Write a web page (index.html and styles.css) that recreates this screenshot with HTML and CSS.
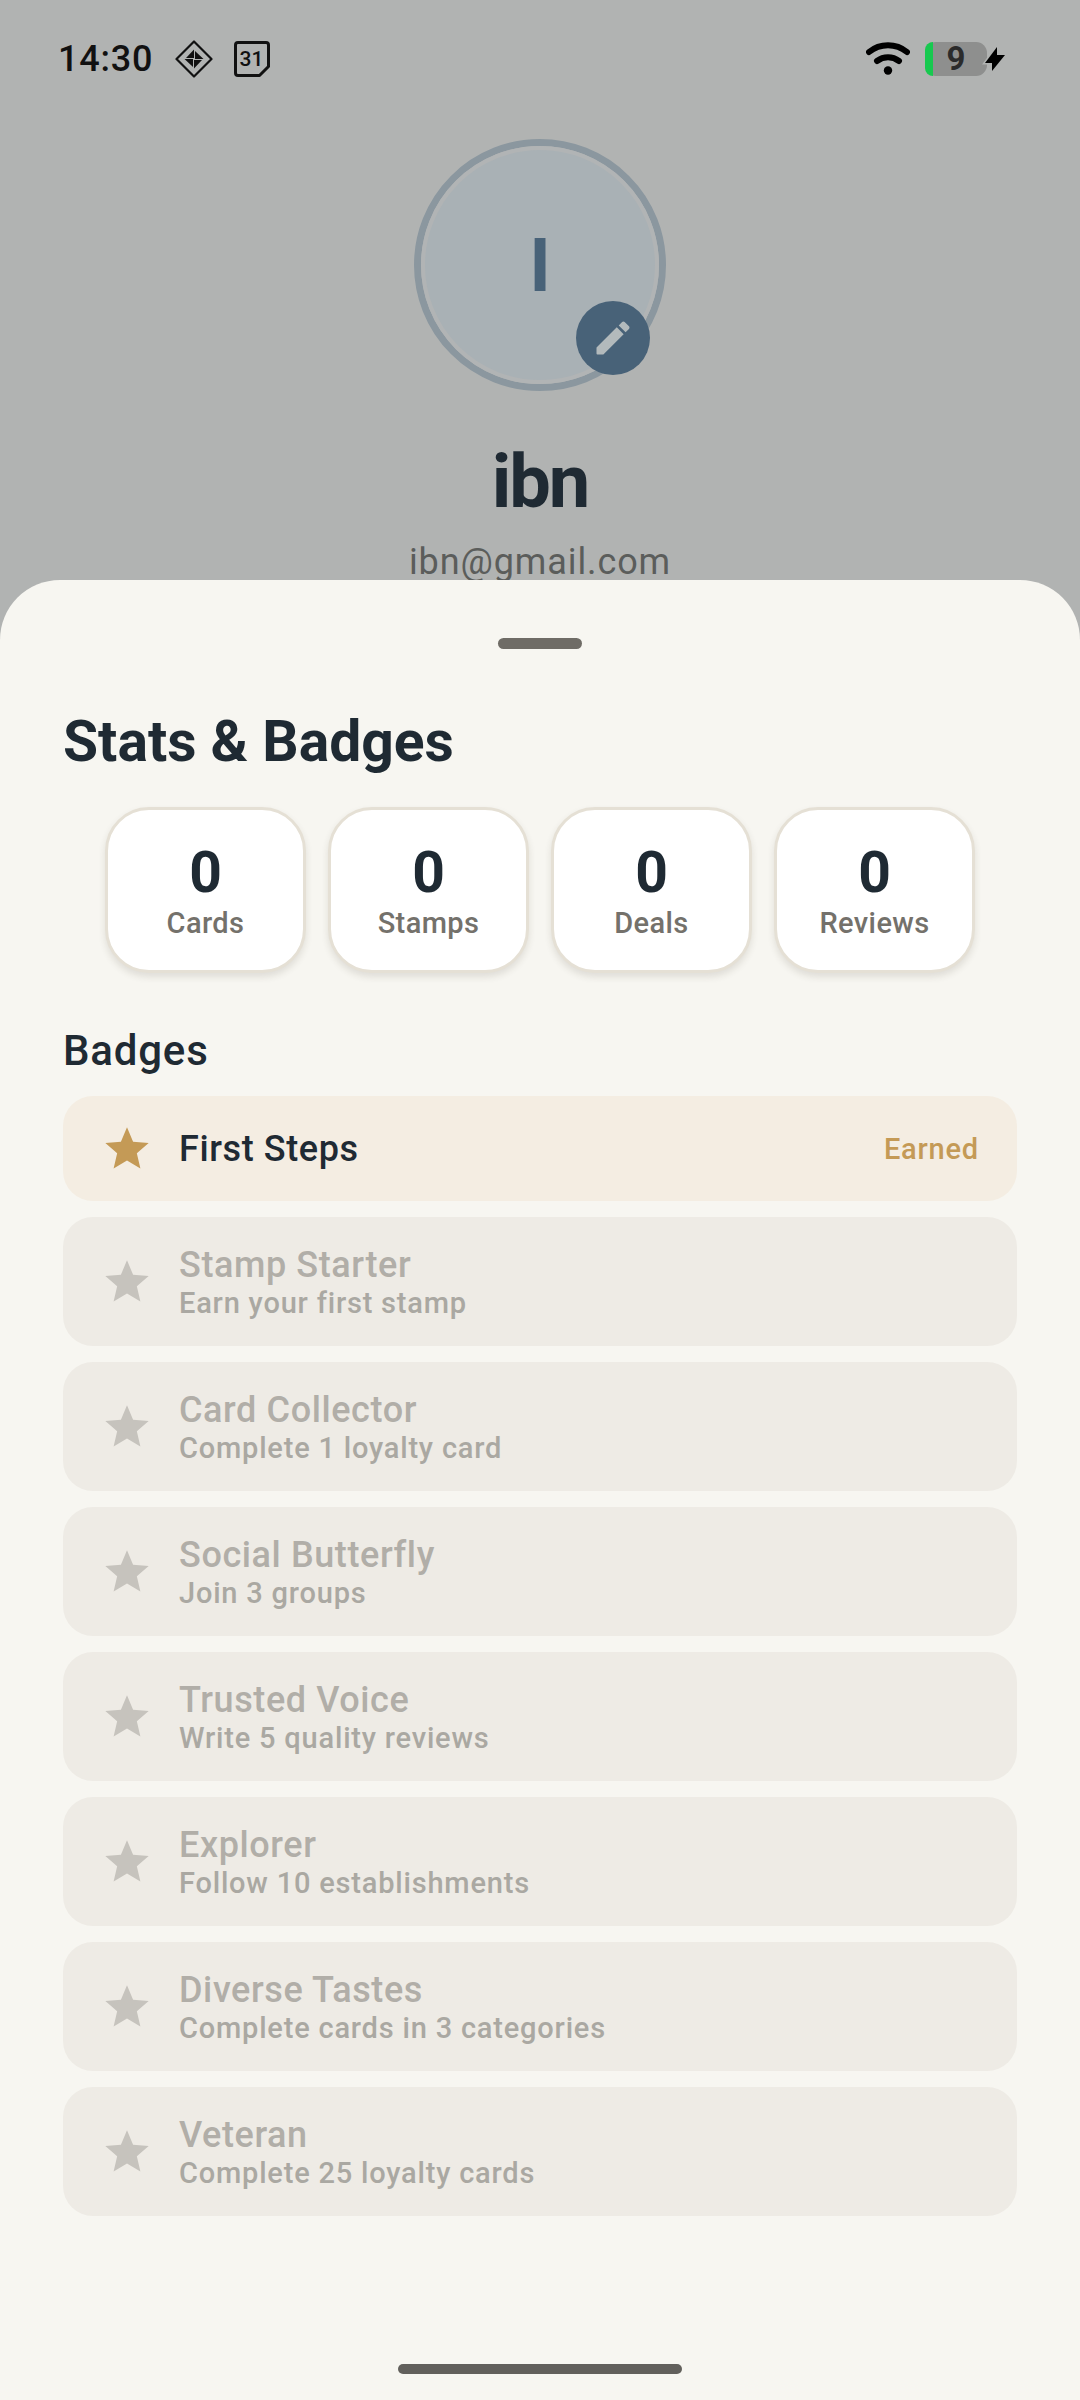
FILE: index.html
```html
<!DOCTYPE html>
<html lang="en">
<head>
    <meta charset="UTF-8">
    <meta name="viewport" content="width=device-width, initial-scale=1.0">
    <title>Stats &amp; Badges</title>
    <link rel="stylesheet" href="styles.css">
</head>
<body>
    <div class="screen">
        <div class="status-bar">
            <div class="status-left">
                <span class="time">14:30</span>
                <svg class="status-diamond" viewBox="0 0 38 38">
                    <path d="M19 1.500 36.500 19 19 36.500 1.500 19z" fill="none" stroke="#111" stroke-width="2.200" stroke-linejoin="round"/>
                    <path d="M19 9.500V18h-8zM28.500 19H20v-8zM19 28.500V20h8zM9.500 19H18v8z" fill="#111"/>
                </svg>
                <svg class="status-calendar" viewBox="0 0 36 36">
                    <path d="M4 1.500h28c1.400 0 2.500 1.100 2.500 2.500v21.500l-9 9H4c-1.400 0-2.500-1.100-2.500-2.500V4c0-1.400 1.100-2.500 2.500-2.500z" fill="none" stroke="#111" stroke-width="3" stroke-linejoin="round"/>
                    <text x="17.500" y="25" text-anchor="middle">31</text>
                </svg>
            </div>
            <div class="status-right">
                <svg class="status-wifi" viewBox="0 0 44 34">
                    <path d="M3 10C14 1 30 1 41 10" fill="none" stroke="#000" stroke-width="6" stroke-linecap="round"/>
                    <path d="M11 19c6.500-5 15.500-5 22 0" fill="none" stroke="#000" stroke-width="6" stroke-linecap="round"/>
                    <circle cx="22" cy="28.500" r="4.200" fill="#000"/>
                </svg>
                <div class="battery"><span class="battery-level"></span><span class="battery-num">9</span></div>
                <svg class="status-bolt" viewBox="0 0 26 30">
                    <path d="M15 3 3 19h7v8l13-16h-8z"/>
                </svg>
            </div>
        </div>

        <div class="profile">
            <div class="avatar">
                <div class="avatar-inner">I</div>
                <div class="avatar-edit">
                    <svg viewBox="0 0 24 24"><path d="M3 17.460v3.040c0 .28.22.5.5.5h3.040c.13 0 .26-.05.35-.15L17.810 9.940l-3.750-3.750L3.150 17.100c-.1.1-.15.220-.15.360zM20.710 7.040c.39-.39.39-1.020 0-1.410l-2.340-2.340c-.39-.39-1.020-.39-1.410 0l-1.830 1.830 3.750 3.750 1.830-1.830z"/></svg>
                </div>
            </div>
            <div class="profile-name">ibn</div>
            <div class="profile-email">ibn@gmail.com</div>
        </div>

        <div class="sheet">
            <div class="sheet-handle"></div>
            <h1 class="sheet-title">Stats &amp; Badges</h1>

            <div class="stats">
                <div class="stat-card"><div class="stat-num">0</div><div class="stat-label">Cards</div></div>
                <div class="stat-card"><div class="stat-num">0</div><div class="stat-label">Stamps</div></div>
                <div class="stat-card"><div class="stat-num">0</div><div class="stat-label">Deals</div></div>
                <div class="stat-card"><div class="stat-num">0</div><div class="stat-label">Reviews</div></div>
            </div>

            <h2 class="badges-title">Badges</h2>
            <div class="badge-list">
                <div class="badge earned">
                    <svg class="star" viewBox="0 0 24 24"><path d="M12 17.270 18.180 21l-1.640-7.030L22 9.240l-7.190-.61L12 2 9.190 8.630 2 9.240l5.460 4.730L5.820 21z"/></svg>
                    <div class="badge-text"><div class="badge-name">First Steps</div></div>
                    <span class="badge-earned">Earned</span>
                </div>
                <div class="badge">
                    <svg class="star" viewBox="0 0 24 24"><path d="M12 17.270 18.180 21l-1.640-7.030L22 9.240l-7.190-.61L12 2 9.190 8.630 2 9.240l5.460 4.730L5.820 21z"/></svg>
                    <div class="badge-text"><div class="badge-name">Stamp Starter</div><div class="badge-desc">Earn your first stamp</div></div>
                </div>
                <div class="badge">
                    <svg class="star" viewBox="0 0 24 24"><path d="M12 17.270 18.180 21l-1.640-7.030L22 9.240l-7.190-.61L12 2 9.190 8.630 2 9.240l5.460 4.730L5.820 21z"/></svg>
                    <div class="badge-text"><div class="badge-name">Card Collector</div><div class="badge-desc">Complete 1 loyalty card</div></div>
                </div>
                <div class="badge">
                    <svg class="star" viewBox="0 0 24 24"><path d="M12 17.270 18.180 21l-1.640-7.030L22 9.240l-7.190-.61L12 2 9.190 8.630 2 9.240l5.460 4.730L5.820 21z"/></svg>
                    <div class="badge-text"><div class="badge-name">Social Butterfly</div><div class="badge-desc">Join 3 groups</div></div>
                </div>
                <div class="badge">
                    <svg class="star" viewBox="0 0 24 24"><path d="M12 17.270 18.180 21l-1.640-7.030L22 9.240l-7.190-.61L12 2 9.190 8.630 2 9.240l5.460 4.730L5.820 21z"/></svg>
                    <div class="badge-text"><div class="badge-name">Trusted Voice</div><div class="badge-desc">Write 5 quality reviews</div></div>
                </div>
                <div class="badge">
                    <svg class="star" viewBox="0 0 24 24"><path d="M12 17.270 18.180 21l-1.640-7.030L22 9.240l-7.190-.61L12 2 9.190 8.630 2 9.240l5.460 4.730L5.820 21z"/></svg>
                    <div class="badge-text"><div class="badge-name">Explorer</div><div class="badge-desc">Follow 10 establishments</div></div>
                </div>
                <div class="badge">
                    <svg class="star" viewBox="0 0 24 24"><path d="M12 17.270 18.180 21l-1.640-7.030L22 9.240l-7.190-.61L12 2 9.190 8.630 2 9.240l5.460 4.730L5.820 21z"/></svg>
                    <div class="badge-text"><div class="badge-name">Diverse Tastes</div><div class="badge-desc">Complete cards in 3 categories</div></div>
                </div>
                <div class="badge">
                    <svg class="star" viewBox="0 0 24 24"><path d="M12 17.270 18.180 21l-1.640-7.030L22 9.240l-7.190-.61L12 2 9.190 8.630 2 9.240l5.460 4.730L5.820 21z"/></svg>
                    <div class="badge-text"><div class="badge-name">Veteran</div><div class="badge-desc">Complete 25 loyalty cards</div></div>
                </div>
            </div>
            <div class="home-pill"></div>
        </div>
    </div>
</body>
</html>
```

FILE: styles.css
```css
* {
    box-sizing: border-box;
}

body {
    margin: 0;
    font-family: Roboto, "Noto Sans", sans-serif;
    background-color: #b1b3b2;
}

.screen {
    position: relative;
    width: 1080px;
    height: 2400px;
    overflow: hidden;
    background-color: #b1b3b2;
}

/* status bar */
.status-bar {
    display: flex;
    justify-content: space-between;
    align-items: center;
    height: 118px;
    padding: 0 72px 0 58px;
}

.status-left,
.status-right {
    display: flex;
    align-items: center;
}

.time {
    font-size: 36px;
    font-weight: 500;
    color: #111;
    letter-spacing: 0.8px;
}

.status-diamond {
    width: 38px;
    height: 38px;
    margin-left: 22px;
}

.status-calendar {
    width: 36px;
    height: 36px;
    margin-left: 21px;
}

.status-calendar text {
    font-size: 21px;
    font-weight: 500;
    fill: #111;
}

.status-wifi {
    width: 44px;
    height: 34px;
}

.battery {
    position: relative;
    display: flex;
    align-items: center;
    justify-content: center;
    width: 62px;
    height: 34px;
    margin-left: 15px;
    border-radius: 11px;
    background-color: #8e8f8e;
}

.battery-level {
    position: absolute;
    left: 0;
    top: 0;
    bottom: 0;
    width: 8px;
    border-radius: 11px 0 0 11px;
    background-color: #17c94f;
}

.battery-num {
    font-size: 33px;
    line-height: 34px;
    font-weight: 700;
    color: #2b2b2b;
}

.status-bolt {
    position: relative;
    width: 26px;
    height: 30px;
    margin-left: -5px;
    overflow: visible;
    fill: #000;
    stroke: #b1b3b2;
    stroke-width: 3px;
    paint-order: stroke;
}

/* profile header */
.profile {
    display: flex;
    flex-direction: column;
    align-items: center;
    padding-top: 21px;
}

.avatar {
    position: relative;
    width: 252px;
    height: 252px;
    border: 7px solid #8b979f;
    border-radius: 50%;
}

.avatar-inner {
    display: flex;
    align-items: center;
    justify-content: center;
    width: 100%;
    height: 100%;
    border: 4px solid #b1b4b5;
    border-radius: 50%;
    background-color: #a9b1b5;
    font-size: 74px;
    font-weight: 700;
    color: #486278;
}

.avatar-edit {
    position: absolute;
    left: 155px;
    top: 155px;
    display: flex;
    align-items: center;
    justify-content: center;
    width: 74px;
    height: 74px;
    border-radius: 50%;
    background-color: #486278;
}

.avatar-edit svg {
    width: 44px;
    height: 44px;
    fill: #b3babc;
}

.profile-name {
    margin-top: 48px;
    font-size: 74px;
    line-height: 86px;
    font-weight: 700;
    letter-spacing: -2px;
    color: #1f2a33;
}

.profile-email {
    margin-top: 15px;
    font-size: 36px;
    line-height: 44px;
    letter-spacing: 0.9px;
    color: #5b5d5b;
}

/* bottom sheet, sits over the header */
.sheet {
    position: absolute;
    left: 0;
    right: 0;
    top: 580px;
    bottom: 0;
    padding: 58px 63px 0;
    border-radius: 60px 60px 0 0;
    background-color: #f7f6f1;
}

.sheet-handle {
    width: 84px;
    height: 11px;
    margin: 0 auto;
    border-radius: 6px;
    background-color: #6f6c66;
}

.sheet-title {
    margin: 60px 0 0;
    font-size: 57px;
    line-height: 66px;
    font-weight: 700;
    color: #1f2a33;
}

.stats {
    display: flex;
    justify-content: center;
    gap: 22px;
    margin-top: 32px;
}

.stat-card {
    display: flex;
    flex-direction: column;
    align-items: center;
    width: 201px;
    height: 166px;
    padding-top: 33px;
    border: 3px solid #e5e0d5;
    border-radius: 44px;
    background-color: #fff;
    box-shadow: 0 4px 7px rgba(60, 50, 30, 0.12);
}

.stat-num {
    font-size: 57px;
    line-height: 60px;
    font-weight: 700;
    color: #1f2a33;
}

.stat-label {
    margin-top: 1px;
    font-size: 29px;
    line-height: 38px;
    font-weight: 500;
    letter-spacing: 0.4px;
    color: #74716b;
}

.badges-title {
    margin: 52px 0 0;
    font-size: 42px;
    line-height: 52px;
    font-weight: 500;
    letter-spacing: 0.8px;
    color: #1f2a33;
}

.badge-list {
    display: flex;
    flex-direction: column;
    gap: 16px;
    margin-top: 19px;
}

.badge {
    display: flex;
    align-items: center;
    gap: 26px;
    height: 129px;
    padding: 0 38px;
    border-radius: 30px;
    background-color: #eeebe5;
}

.badge.earned {
    height: 105px;
    background-color: #f4ede2;
}

.star {
    flex: none;
    width: 52px;
    height: 52px;
    fill: #c6c3bd;
}

.earned .star {
    fill: #c49a56;
}

.badge-text {
    flex: 1;
}

.badge-name {
    font-size: 36px;
    line-height: 42px;
    font-weight: 500;
    letter-spacing: 0.6px;
    color: #b1aea8;
}

.earned .badge-name {
    color: #1f2a33;
}

.badge-desc {
    font-size: 29px;
    line-height: 34px;
    font-weight: 500;
    letter-spacing: 0.8px;
    color: #aaa8a2;
}

.badge-earned {
    padding-top: 1px;
    font-size: 29px;
    font-weight: 500;
    letter-spacing: 0.8px;
    color: #c49a56;
}

.home-pill {
    position: absolute;
    left: 398px;
    bottom: 26px;
    width: 284px;
    height: 10px;
    border-radius: 5px;
    background-color: #62605c;
}
```
